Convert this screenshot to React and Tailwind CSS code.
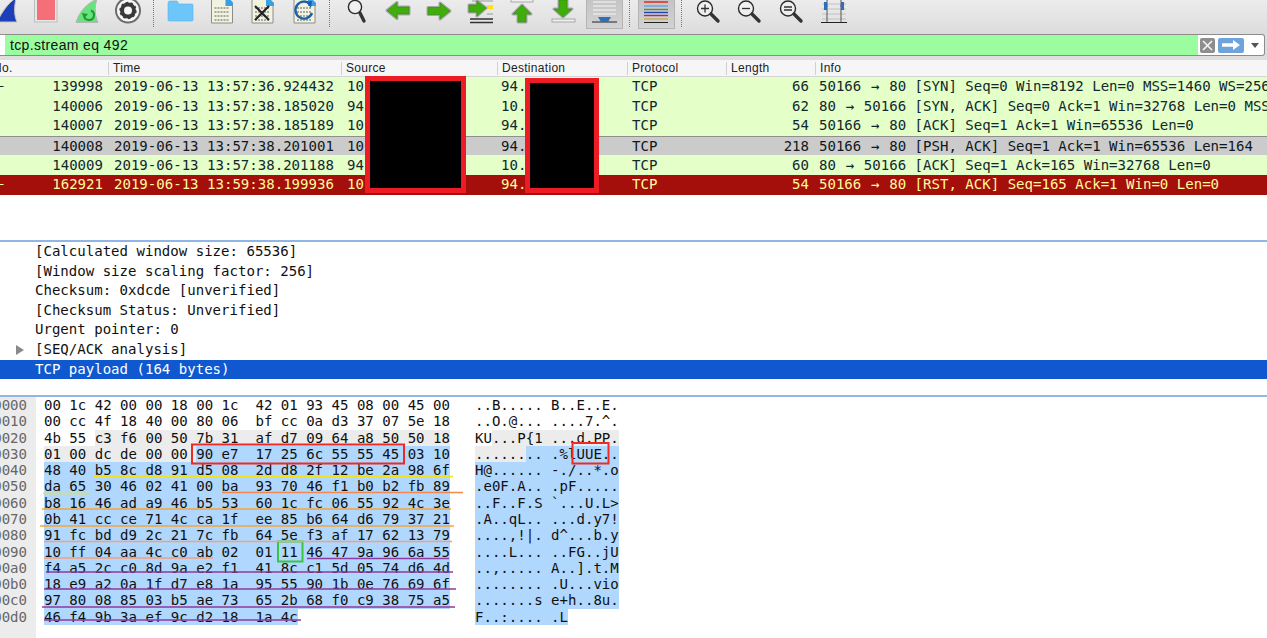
import React from "react";

const MONO = "font-['DejaVu_Sans_Mono',monospace]";

const PACKETS = [
  { no: "139998", time: "2019-06-13 13:57:36.924432", src: "10", dst: "94.", len: "66", head: "50166", tail: "80 [SYN] Seq=0 Win=8192 Len=0 MSS=1460 WS=256 SACK_PERM=1", mark: "–", tone: "bg-[#e4ffc7] text-[#12272e]" },
  { no: "140006", time: "2019-06-13 13:57:38.185020", src: "94", dst: "10.", len: "62", head: "80", tail: "50166 [SYN, ACK] Seq=0 Ack=1 Win=32768 Len=0 MSS=1460", tone: "bg-[#e4ffc7] text-[#12272e]" },
  { no: "140007", time: "2019-06-13 13:57:38.185189", src: "10", dst: "94.", len: "54", head: "50166", tail: "80 [ACK] Seq=1 Ack=1 Win=65536 Len=0", tone: "bg-[#e4ffc7] text-[#12272e]" },
  { no: "140008", time: "2019-06-13 13:57:38.201001", src: "10", dst: "94.", len: "218", head: "50166", tail: "80 [PSH, ACK] Seq=1 Ack=1 Win=65536 Len=164", tone: "bg-[#cbcbcb] text-[#10181c] border-t border-[#8f8f8f]" },
  { no: "140009", time: "2019-06-13 13:57:38.201188", src: "94", dst: "10.", len: "60", head: "80", tail: "50166 [ACK] Seq=1 Ack=165 Win=32768 Len=0", tone: "bg-[#e4ffc7] text-[#12272e]" },
  { no: "162921", time: "2019-06-13 13:59:38.199936", src: "10", dst: "94.", len: "54", head: "50166", tail: "80 [RST, ACK] Seq=165 Ack=1 Win=0 Len=0", mark: "–", tone: "bg-[#a40e0b] text-[#fffc9c]" },
];

const DETAILS = [
  "[Calculated window size: 65536]",
  "[Window size scaling factor: 256]",
  "Checksum: 0xdcde [unverified]",
  "[Checksum Status: Unverified]",
  "Urgent pointer: 0",
];

// last field says how the row's selection background runs
const HEX = [
  ["0000", "00 1c 42 00 00 18 00 1c  42 01 93 45 08 00 45 00", "..B..... B..E..E.", "plain"],
  ["0010", "00 cc 4f 18 40 00 80 06  bf cc 0a d3 37 07 5e 18", "..O.@... ....7.^.", "plain"],
  ["0020", "4b 55 c3 f6 00 50 7b 31  af d7 09 64 a8 50 50 18", "KU...P{1 ...d.PP.", "gray"],
  ["0030", "01 00 dc de 00 00 90 e7  17 25 6c 55 55 45 03 10", "........ .%lUUE..", "split"],
  ["0040", "48 40 b5 8c d8 91 d5 08  2d d8 2f 12 be 2a 98 6f", "H@...... -./..*.o", "blue"],
  ["0050", "da 65 30 46 02 41 00 ba  93 70 46 f1 b0 b2 fb 89", ".e0F.A.. .pF.....", "blue"],
  ["0060", "b8 16 46 ad a9 46 b5 53  60 1c fc 06 55 92 4c 3e", "..F..F.S `...U.L>", "blue"],
  ["0070", "0b 41 cc ce 71 4c ca 1f  ee 85 b6 64 d6 79 37 21", ".A..qL.. ...d.y7!", "blue"],
  ["0080", "91 fc bd d9 2c 21 7c fb  64 5e f3 af 17 62 13 79", "....,!|. d^...b.y", "blue"],
  ["0090", "10 ff 04 aa 4c c0 ab 02  01 11 46 47 9a 96 6a 55", "....L... ..FG..jU", "blue"],
  ["00a0", "f4 a5 2c c0 8d 9a e2 f1  41 8c c1 5d 05 74 d6 4d", "..,..... A..].t.M", "blue"],
  ["00b0", "18 e9 a2 0a 1f d7 e8 1a  95 55 90 1b 0e 76 69 6f", "........ .U...vio", "blue"],
  ["00c0", "97 80 08 85 03 b5 ae 73  65 2b 68 f0 c9 38 75 a5", ".......s e+h..8u.", "blue"],
  ["00d0", "46 f4 9b 3a ef 9c d2 18  1a 4c", "F..:.... .L", "blue"],
];

const GRAY = "h-full bg-[#ececec]";
const BLUE = "h-full bg-[#b0d7fd]";

// Toolbar drawings use page coordinates, so the viewBox is the icon's x range
const Ico = ({ x, w, className = "", children }) => (
  <svg width={w} height="34" viewBox={`${x} 0 ${w} 34`} className={`shrink-0 ${className}`}>
    {children}
  </svg>
);

const Sep = ({ className = "" }) => (
  <div className={`h-[27px] self-start border-l border-dotted border-[#777] ${className}`} />
);

const Arrow = ({ d }) => (
  <>
    <path d={d} fill="#f4f4f4" stroke="#a8a8a8" strokeWidth="3" strokeLinejoin="round" />
    <path d={d} fill="#3fae0a" stroke="#2c8c08" strokeWidth="0.6" />
  </>
);

const Paper = ({ x }) => (
  <>
    <path d={`M${x} -2h16l5 5v20h-21z`} fill="#f1f3df" stroke="#8c8c8c" />
    <path d={`M${x + 14} -2h3l5 5v3h-8z`} fill="#3aa0e0" />
    {[8, 12, 16, 20].map((y) => (
      <path key={y} d={`M${x + 3} ${y}h15`} stroke="#a9a9a0" strokeWidth="2" strokeDasharray="2 1" />
    ))}
  </>
);

const Lens = ({ cx, children }) => (
  <>
    <circle cx={cx} cy="8.5" r="7.5" fill="#fafafa" fillOpacity="0.4" stroke="#2b2b2b" strokeWidth="1.4" />
    <path d={`M${cx + 6} 14l7 7`} stroke="#333" strokeWidth="3.4" strokeLinecap="round" />
    {children}
  </>
);

const Toolbar = () => (
  <div className="flex h-[34px] items-start bg-gradient-to-b from-[#ececec] to-[#dcdcdc]">
    <Ico x={0} w={18}>
      <path d="M-3 22C2 12 8 3 16 -2C14 8 14 15 17 22Z" fill="#1c3fb8" stroke="#c4c4c4" />
    </Ico>
    <Ico x={34} w={25} className="ml-[16px]">
      <rect x="34.5" y="-2" width="22.500" height="24" fill="#e6e6e6" stroke="#bdbdbd" />
      <rect x="37" y="-1" width="18" height="21" fill="#f56f78" />
    </Ico>
    <Ico x={75} w={30} className="ml-[16px]">
      <path d="M76 22.500C80 10 88 3 97 -1C94 8 95 16 98 22.500Z" fill="#68e27a" stroke="#b5b5b5" />
      <path d="M91 10.500a5 5 0 1 1 -7 5" fill="none" stroke="#1e9a35" strokeWidth="2" />
      <path d="M81.500 13l3 5l3.500 -4z" fill="#1e9a35" />
    </Ico>
    <Ico x={115} w={26} className="ml-[10px]">
      <circle cx="128" cy="10.5" r="12" fill="#f7f7f7" stroke="#6b6b6b" strokeWidth="2" />
      <circle cx="128" cy="10.5" r="6" fill="none" stroke="#3a3a3a" strokeWidth="4" />
      <circle cx="128" cy="10.5" r="7.5" fill="none" stroke="#3a3a3a" strokeWidth="2.4" strokeDasharray="2.4 2.3" />
    </Ico>
    <Sep className="ml-[12px]" />
    <Ico x={167} w={27} className="ml-[13px]">
      <path d="M168 3a2 2 0 0 1 2 -2h7l2 3h13a1 1 0 0 1 1 1v15a1 1 0 0 1 -1 1h-23a1 1 0 0 1 -1 -1z" fill="#6cc6fa" stroke="#5fb4ea" strokeWidth="0.6" />
    </Ico>
    <Ico x={211} w={22} className="ml-[17px]">
      <Paper x={211.5} />
    </Ico>
    <Ico x={251} w={23} className="ml-[18px]">
      <Paper x={252} />
      <path d="M255 6l14 14M269 6l-14 14" stroke="#222" strokeWidth="2.2" />
    </Ico>
    <Ico x={293} w={23} className="ml-[19px]">
      <Paper x={294} />
      <path d="M310 4a8.5 8.5 0 1 0 2 9" fill="none" stroke="#1d5fa8" strokeWidth="2.4" />
      <path d="M306 2l6 -1l-1 7z" fill="#1d5fa8" />
    </Ico>
    <Sep className="ml-[13px]" />
    <Ico x={346} w={21} className="ml-[16px]">
      <path d="M360 13l4 8" stroke="#333" strokeWidth="3.4" strokeLinecap="round" />
      <circle cx="355" cy="7" r="6.6" fill="#fafafa" fillOpacity="0.5" stroke="#2b2b2b" strokeWidth="1.4" />
    </Ico>
    <Ico x={385} w={27} className="ml-[18px]">
      <Arrow d="M387 10.5l10 -8v4.5h12v7h-12v4.5z" />
    </Ico>
    <Ico x={426} w={27} className="ml-[14px]">
      <Arrow d="M450 11l-10 -8v4.5h-12v7h12v4.5z" />
    </Ico>
    <Ico x={467} w={30} className="ml-[14px]">
      <path d="M470 19h23M470 22.5h23" stroke="#333" strokeWidth="1.4" />
      <rect x="487" y="5" width="6" height="4" fill="#ffe21a" />
      <path d="M472 1h21M487 14h6" stroke="#999" strokeWidth="1.2" />
      <Arrow d="M486 8l-9 -7v4h-8v7h8v4z" />
    </Ico>
    <Ico x={510} w={24} className="ml-[13px]">
      <rect x="511" y="-2" width="22" height="4" fill="#eee" stroke="#a8a8a8" />
      <Arrow d="M522 5l9 9h-5v8h-8v-8h-5z" />
    </Ico>
    <Ico x={550} w={27} className="ml-[16px]">
      <rect x="552" y="19" width="23" height="3" fill="#eee" stroke="#a8a8a8" />
      <Arrow d="M563 17l-9 -8h5v-9h8v9h5z" />
    </Ico>
    <div className="ml-[9px] flex h-[29px] w-[37px] shrink-0 justify-center border-x border-b border-[#b4b4b4] bg-gradient-to-b from-[#c4c4c4] to-[#d2d2d2]">
      <Ico x={592} w={25}>
        <path d="M593 2h23M593 6h23M593 10h23M593 14h23" stroke="#e8e8e8" strokeWidth="1.4" />
        <path d="M592 22h25" stroke="#222" strokeWidth="1" />
        <path d="M598 17h13l-3 5h-7z" fill="#2f6fb8" />
      </Ico>
    </div>
    <Sep className="ml-[6px]" />
    <div className="ml-[8px] flex h-[29px] w-[37px] shrink-0 justify-center border-x border-b border-[#b4b4b4] bg-gradient-to-b from-[#c4c4c4] to-[#d2d2d2]">
      <Ico x={644} w={25}>
        <path d="M644 2h24" stroke="#d33" strokeWidth="1.6" />
        <path d="M644 6h24" stroke="#74a7d8" strokeWidth="1.6" />
        <path d="M644 9.5h24" stroke="#3a9c4a" strokeWidth="1.4" />
        <path d="M644 12.5h24" stroke="#2a3fb0" strokeWidth="1.4" />
        <path d="M644 15.5h24" stroke="#8e2fa0" strokeWidth="1.4" />
        <path d="M644 19h24" stroke="#d2b56a" strokeWidth="2" />
        <path d="M644 22.5h24" stroke="#222" strokeWidth="1" />
      </Ico>
    </div>
    <Sep className="ml-[6px]" />
    <Ico x={696} w={26} className="ml-[14px]">
      <Lens cx={705}>
        <path d="M701 8.5h8M705 4.5v8" stroke="#333" strokeWidth="1.3" />
      </Lens>
    </Ico>
    <Ico x={737} w={26} className="ml-[15px]">
      <Lens cx={746}>
        <path d="M742 8.5h8" stroke="#333" strokeWidth="1.3" />
      </Lens>
    </Ico>
    <Ico x={777} w={26} className="ml-[15px]">
      <Lens cx={787}>
        <path d="M783 7h8M783 10h8" stroke="#333" strokeWidth="1.3" />
      </Lens>
    </Ico>
    <Ico x={819} w={28} className="ml-[16px]">
      <path d="M821 4h24M821 9h24M821 14h24M821 19h24" stroke="#c2c2c2" strokeWidth="1.2" />
      <path d="M820 22.5h26" stroke="#222" />
      <path d="M826 0v22M840 0v22" stroke="#555" />
      <path d="M823 2l4 4l-4 4zM843 2l-4 4l4 4z" fill="#2f6fb8" />
      <rect x="823" y="2" width="3" height="8" fill="#2f6fb8" />
      <rect x="840" y="2" width="3" height="8" fill="#2f6fb8" />
    </Ico>
  </div>
);

const FilterBar = () => (
  <div className="flex h-[26px] bg-[#dedede] pr-[2px] pb-[4px]">
    <div className="flex flex-1 items-stretch overflow-hidden rounded-r-[3px] border-y border-r border-[#8c8c8c] bg-white">
      <div className="w-[5px]" />
      <div className="flex flex-1 items-center bg-[#9bfd9f] pl-[5px] font-['Liberation_Sans',sans-serif] text-[14px] tracking-[0.35px] text-[#101010]">
        tcp.stream eq 492
      </div>
      <div className="flex w-[66px] items-center pl-[2px]">
        <div className="flex h-[15px] w-[15px] items-center justify-center rounded-[2px] bg-[#8e8e8e]">
          <svg width="11" height="11" viewBox="0 0 11 11">
            <path d="M1 1l9 9M10 1l-9 9" stroke="#f5f5f5" strokeWidth="1.6" />
          </svg>
        </div>
        <div className="ml-[3px] flex h-[15px] w-[26px] items-center justify-center rounded-[2px] bg-[#6fa3dc]">
          <svg width="18" height="10" viewBox="0 0 18 10">
            <path d="M0 3.2h11V0l7 5l-7 5V6.800H0z" fill="#fff" />
          </svg>
        </div>
        <svg width="8" height="5" viewBox="0 0 8 5" className="ml-[7px]">
          <path d="M0 0h8l-4 5z" fill="#555" />
        </svg>
      </div>
    </div>
  </div>
);

const PacketHeader = () => (
  <div className="flex h-[17px] items-center border-b border-[#d4d4d4] bg-[#f6f6f6] font-['Liberation_Sans',sans-serif] text-[12px] tracking-[0.3px] text-[#222]">
    <div className="relative w-[108px] overflow-hidden">
      <span className="ml-[-7px]">No.</span>
    </div>
    <div className="h-[13px] w-[233px] border-l border-[#d0d0d0] pl-[4px] leading-[13px]">Time</div>
    <div className="h-[13px] w-[156px] border-l border-[#d0d0d0] pl-[4px] leading-[13px]">Source</div>
    <div className="h-[13px] w-[130px] border-l border-[#d0d0d0] pl-[4px] leading-[13px]">Destination</div>
    <div className="h-[13px] w-[99px] border-l border-[#d0d0d0] pl-[4px] leading-[13px]">Protocol</div>
    <div className="h-[13px] w-[89px] border-l border-[#d0d0d0] pl-[4px] leading-[13px]">Length</div>
    <div className="h-[13px] flex-1 border-l border-[#d0d0d0] pl-[4px] leading-[13px]">Info</div>
  </div>
);

const PacketRow = ({ p }) => (
  <div className={`flex h-[19.6px] items-center whitespace-pre ${p.tone}`}>
    <div className="relative w-[108px] shrink-0 pr-[5px] text-right">
      {p.mark && <span className="absolute left-[-5px] top-[-1px]">{p.mark}</span>}
      {p.no}
    </div>
    <div className="w-[233px] shrink-0 pl-[6px]">{p.time}</div>
    <div className="w-[156px] shrink-0 pl-[6px]">{p.src}</div>
    <div className="w-[130px] shrink-0 pl-[4px]">{p.dst}</div>
    <div className="w-[99px] shrink-0 pl-[5px]">TCP</div>
    <div className="w-[89px] shrink-0 pr-[6px] text-right">{p.len}</div>
    <div className="flex-1 overflow-hidden pl-[4px]">
      {p.head} <span className="inline-block w-[11px] text-center">→</span> {p.tail}
    </div>
  </div>
);

const HexCols = ({ row }) => {
  const [, hex, ascii, kind] = row;
  if (kind === "plain")
    return (
      <>
        <div className="flex h-full w-[431px]"><span>{hex}</span></div>
        <div className="flex h-full"><span>{ascii}</span></div>
      </>
    );
  if (kind === "gray")
    return (
      <>
        <div className="flex h-full w-[431px]">
          <span>{hex.slice(0, 6)}</span>
          <span className={GRAY}>{hex.slice(6)}</span>
        </div>
        <div className="flex h-full">
          <span>{ascii.slice(0, 2)}</span>
          <span className={GRAY}>{ascii.slice(2)}</span>
        </div>
      </>
    );
  if (kind === "split")
    return (
      <>
        <div className="flex h-full w-[431px]">
          <span className={GRAY}>{hex.slice(0, 18)}</span>
          <span className={BLUE}>{hex.slice(18)}</span>
        </div>
        <div className="flex h-full">
          <span className={GRAY}>{ascii.slice(0, 6)}</span>
          <span className={BLUE}>{ascii.slice(6)}</span>
        </div>
      </>
    );
  return (
    <>
      <div className="flex h-full w-[431px]"><span className={BLUE}>{hex}</span></div>
      <div className="flex h-full"><span className={BLUE}>{ascii}</span></div>
    </>
  );
};

// Hand drawn marks on top of the hex dump, page coordinates
const Scribbles = () => (
  <svg className="absolute inset-0" width="1267" height="241" viewBox="0 397 1267 241" fill="none">
    <rect x="192" y="444.500" width="212" height="19" stroke="#ee2a24" strokeWidth="2" />
    <rect x="572.500" y="443" width="36" height="20.500" stroke="#ee2a24" strokeWidth="2" />
    <rect x="278" y="541.500" width="24.500" height="20" stroke="#35c742" strokeWidth="2" />
    <path d="M94 476.500H453M43 493.500H90" stroke="#f2e21c" strokeWidth="1.600" />
    <path d="M222 492.500H463" stroke="#f5874a" strokeWidth="1.600" />
    <path d="M42 509H451M40 526H454" stroke="#f5a53c" strokeWidth="1.600" />
    <path d="M44 541.500H452M44 558H213" stroke="#f2a07e" strokeWidth="1.600" />
    <path d="M307 558.500H449M46 572H453M44 589H456M42 607H455M44 620H301" stroke="#8e3a9e" strokeWidth="1.600" />
  </svg>
);

export default function App() {
  return (
    <div className="h-[638px] w-[1267px] overflow-hidden bg-white">
      <Toolbar />
      <FilterBar />
      <PacketHeader />

      <div className={`relative text-[14.05px] ${MONO}`}>
        {PACKETS.map((p) => (
          <PacketRow key={p.no} p={p} />
        ))}
        {/* redaction boxes */}
        <div className="absolute left-[365px] top-[-1px] h-[117px] w-[101px] border-[5px] border-[#ed1c24] bg-black" />
        <div className="absolute left-[525px] top-[1px] h-[115px] w-[74px] border-[5px] border-[#ed1c24] bg-black" />
      </div>

      <div className="h-[45.400px]" />
      <div className="h-[2px] bg-[#8fb6e4]" />

      <div className={`text-[14.05px] leading-[19.6px] text-[#101010] ${MONO}`}>
        {DETAILS.map((d) => (
          <div key={d} className="h-[19.6px] whitespace-pre pl-[35px]">{d}</div>
        ))}
        <div className="flex h-[19.6px] items-center whitespace-pre">
          <svg width="8" height="10" viewBox="0 0 8 10" className="ml-[16px] mr-[11px]">
            <path d="M0 0l8 5l-8 5z" fill="#8a8a8a" />
          </svg>
          [SEQ/ACK analysis]
        </div>
        <div className="h-[19.6px] whitespace-pre bg-[#1058d0] pl-[35px] text-white">TCP payload (164 bytes)</div>
      </div>

      <div className="h-[15.800px]" />
      <div className="h-[2px] bg-[#8fb6e4]" />

      <div className={`relative flex h-[241px] text-[14.05px] leading-[16.3px] text-[#101010] ${MONO}`}>
        <div className="w-[36px] shrink-0 bg-[#ececec] text-[#666]">
          {HEX.map((r) => (
            <div key={r[0]} className="flex h-[16.3px] justify-end overflow-hidden pr-[9px]">
              <span className="shrink-0">{r[0]}</span>
            </div>
          ))}
        </div>
        <div className="pl-[8px]">
          {HEX.map((r) => (
            <div key={r[0]} className="flex h-[16.3px] whitespace-pre">
              <HexCols row={r} />
            </div>
          ))}
        </div>
        <Scribbles />
      </div>
    </div>
  );
}
